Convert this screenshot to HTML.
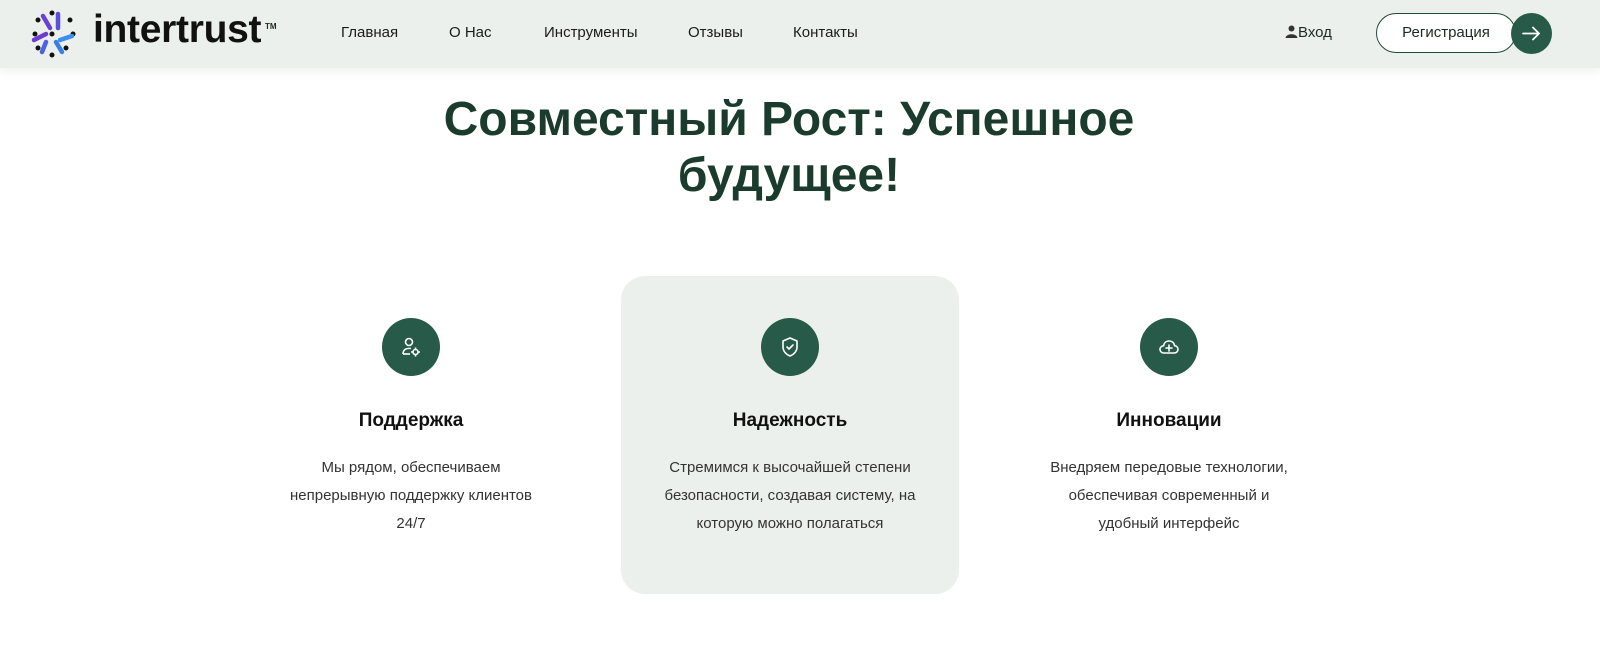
<!DOCTYPE html>
<html><head><meta charset="utf-8"><style>
*{margin:0;padding:0;box-sizing:border-box}
body{width:1600px;height:659px;background:#fff;font-family:"Liberation Sans",sans-serif;overflow:hidden;position:relative;color:#1b2a22}
.hdr{position:absolute;left:0;top:0;width:1600px;height:68px;background:#ecf0ec;box-shadow:0 2px 10px rgba(0,0,0,.08)}
.nav a{position:absolute;top:24px;font-size:15px;color:#1b1b1b;text-decoration:none}
.logo{position:absolute;left:28px;top:6px}
.logotext{position:absolute;left:93px;top:8px;font-size:39px;font-weight:bold;color:#111;letter-spacing:-0.3px}
.tm{position:absolute;left:265px;top:22px;font-size:8px;font-weight:bold}
.login{position:absolute;left:1285px;top:24px;font-size:15px}
.reg{position:absolute;left:1376px;top:13px;width:140px;height:40px;border:1.5px solid #1f4a3a;border-radius:20px;background:#fff;font-size:15px;text-align:center;line-height:37px}
.arr{position:absolute;left:1511px;top:13px;width:41px;height:41px;border-radius:50%;background:#275a49;color:#fff}
h1{position:absolute;left:0;width:1578px;top:92px;text-align:center;font-size:48px;line-height:56px;color:#1a3b2d;font-weight:bold}
.card{position:absolute;top:276px;width:338px;height:318px;text-align:center}
.card.mid{background:#ecf0ec;border-radius:24px}
.ic{position:absolute;left:140px;top:42px;width:58px;height:58px;border-radius:50%;background:#275a49}
.ic svg{position:absolute;left:17px;top:17px}
.card h3{position:absolute;top:134px;width:100%;font-size:19px;font-weight:bold;color:#111}
.card p{position:absolute;top:178px;left:50%;transform:translateX(-50%);font-size:15px;line-height:28px;color:#333}
</style></head><body>
<div class="hdr">
<svg class="logo" width="56" height="56" viewBox="0 0 56 56">
<g fill="#111"><circle cx="24" cy="7" r="2.5"/><circle cx="10" cy="14" r="2.5"/><circle cx="42" cy="14" r="2.5"/><circle cx="7" cy="28" r="2.5"/><circle cx="24" cy="28" r="2.5"/><circle cx="45" cy="28" r="2.5"/><circle cx="10" cy="42" r="2.5"/><circle cx="38" cy="42" r="2.5"/><circle cx="24" cy="49" r="2.5"/></g>
<g stroke-width="4.5" stroke-linecap="round" fill="none">
<path d="M15 10 L22 22" stroke="#6a3fd6"/><path d="M30 8 L30 22" stroke="#5b4ddf"/>
<path d="M6 34 L18 28" stroke="#6b3cd2"/><path d="M32 34 L44 30" stroke="#3d8ef2"/>
<path d="M18 36 L14 46" stroke="#4b62e4"/><path d="M28 36 L34 46" stroke="#3a7fe8"/>
</g></svg>
<div class="logotext">intertrust</div><div class="tm">TM</div>
<div class="nav"><a style="left:341px">Главная</a><a style="left:449px">О Нас</a><a style="left:544px">Инструменты</a><a style="left:688px">Отзывы</a><a style="left:793px">Контакты</a></div>
<div class="login"><svg width="13" height="13" viewBox="0 0 13 13" style="vertical-align:-1px"><circle cx="6.5" cy="3.5" r="3" fill="#333"/><path d="M0.5 13 C1 8 12 8 12.5 13Z" fill="#333"/></svg>Вход</div>
<div class="reg">Регистрация</div>
<div class="arr"><svg width="41" height="41" viewBox="0 0 41 41"><path d="M12 20.5 H28 M22 14.5 L28 20.5 L22 26.5" stroke="#fff" stroke-width="1.8" fill="none" stroke-linecap="round"/></svg></div>
</div>
<h1>Совместный Рост: Успешное<br>будущее!</h1>
<div class="card" style="left:242px"><div class="ic"><svg width="24" height="24" viewBox="0 0 24 24" fill="none" stroke="#fff" stroke-width="1.6"><circle cx="10" cy="7" r="3.5"/><path d="M4 19 C4 14 8 13 12 13.5"/><path d="M4 19 H11"/><circle cx="16.5" cy="17" r="2.5"/><path d="M16.5 12.5v2M16.5 19.5v2M12 17h2M19 17h2"/></svg></div><h3>Поддержка</h3><p style="width:250px">Мы рядом, обеспечиваем непрерывную поддержку клиентов 24/7</p></div>
<div class="card mid" style="left:621px"><div class="ic"><svg width="24" height="24" viewBox="0 0 24 24" fill="none" stroke="#fff" stroke-width="1.6" stroke-linejoin="round"><path d="M12 3 L19 6 V12 C19 16 16 19.5 12 21 C8 19.5 5 16 5 12 V6 Z"/><path d="M9 12 L11 14 L15 10" stroke-linecap="round"/></svg></div><h3>Надежность</h3><p style="width:270px">Стремимся к высочайшей степени безопасности, создавая систему, на которую можно полагаться</p></div>
<div class="card" style="left:1000px"><div class="ic"><svg width="24" height="24" viewBox="0 0 24 24" fill="none" stroke="#fff" stroke-width="1.6" stroke-linejoin="round"><path d="M7 18 H17 C19.5 18 21 16.3 21 14.3 C21 12.3 19.5 10.8 17.6 10.7 C17 7.5 14.8 6 12 6 C9 6 7 8 6.6 10.7 C4.6 11 3 12.4 3 14.4 C3 16.4 4.6 18 7 18Z"/><path d="M12 10v6M9 13h6" stroke-linecap="round"/></svg></div><h3>Инновации</h3><p style="width:255px">Внедряем передовые технологии, обеспечивая современный и удобный интерфейс</p></div>
</body></html>
